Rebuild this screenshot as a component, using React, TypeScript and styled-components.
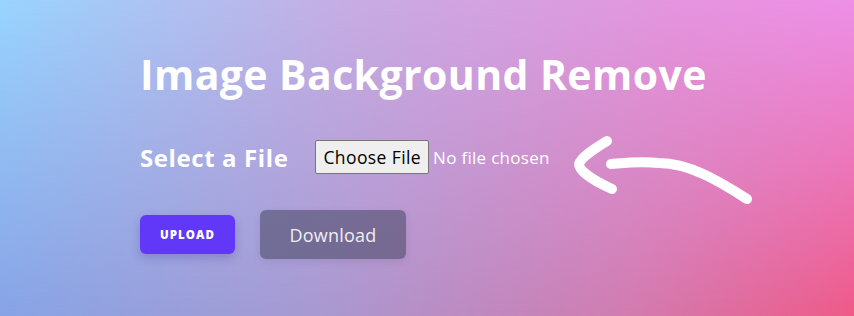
import styled, { createGlobalStyle } from "styled-components";

const GlobalStyle = createGlobalStyle`
  html, body {
    margin: 0;
    padding: 0;
    height: 100%;
  }
  body {
    font-family: "Open Sans", "Noto Sans", sans-serif;
  }
  #root {
    min-height: 100%;
  }
`;

const Page = styled.div`
  position: relative;
  min-height: 316px;
  overflow: hidden;
  background: linear-gradient(100deg, #82a6ea 0%, #a79ad2 40%, #d27cb0 75%, #ef5a88 100%);
  &::before {
    content: "";
    position: absolute;
    inset: 0;
    background: linear-gradient(100deg, #98d4fe 0%, #c8abe2 40%, #e594de 75%, #ef8ee9 100%);
    -webkit-mask-image: linear-gradient(to bottom, #000 0%, rgba(0, 0, 0, 0.45) 55%, transparent 100%);
    mask-image: linear-gradient(to bottom, #000 0%, rgba(0, 0, 0, 0.45) 55%, transparent 100%);
  }
`;

const Content = styled.div`
  position: relative;
  display: flex;
  flex-direction: column;
  padding: 46px 0 0 140px;
`;

const Title = styled.h1`
  margin: 0;
  font-size: 41px;
  font-weight: 700;
  line-height: 56px;
  color: #fff;
  letter-spacing: 0.4px;
`;

const FileRow = styled.div`
  display: flex;
  align-items: center;
  margin-top: 35px;
  height: 40px;
`;

const Label = styled.label`
  font-size: 24px;
  font-weight: 700;
  color: #fff;
  letter-spacing: 0.6px;
  margin-right: 27px;
`;

const FileInput = styled.input`
  font-family: "Open Sans", sans-serif;
  font-size: 17px;
  color: #fff;
  width: 238px;
  letter-spacing: 0.3px;
  &::file-selector-button {
    font-family: inherit;
    font-size: 17.5px;
    letter-spacing: 0.4px;
    color: #000;
    background: #efefef;
    border: 1px solid #767676;
    border-radius: 2px;
    padding: 4px 7px;
    margin-right: 4px;
  }
`;

const Arrow = styled.svg`
  margin-left: 16px;
  margin-top: 27px;
  flex: none;
`;

const Buttons = styled.div`
  display: flex;
  align-items: center;
  gap: 25px;
  margin-top: 33px;
`;

const UploadButton = styled.button`
  width: 95px;
  height: 39px;
  border: 0;
  border-radius: 6px;
  background: #6238f8;
  color: #fff;
  font-family: inherit;
  font-size: 11.5px;
  font-weight: 800;
  letter-spacing: 1.1px;
  text-transform: uppercase;
  box-shadow: 0 4px 10px rgba(60, 40, 140, 0.25);
  cursor: pointer;
`;

const DownloadButton = styled.button`
  width: 146px;
  height: 49px;
  border: 0;
  border-radius: 6px;
  background: rgba(72, 72, 102, 0.58);
  color: #f1eef6;
  font-family: inherit;
  font-size: 18px;
  font-weight: 500;
  letter-spacing: 0.2px;
  box-shadow: 0 3px 8px rgba(0, 0, 0, 0.08);
  cursor: pointer;
`;

export default function App() {
  return (
    <Page>
      <GlobalStyle />
      <Content>
        <Title>Image Background Remove</Title>
        <FileRow>
          <Label htmlFor="file">Select a File</Label>
          <FileInput id="file" type="file" />
          <Arrow width="190" height="80" viewBox="0 0 190 80">
            <path
              d="M178 68 C150 50 120 32 90 32 C70 30 55 32 42 33 M38 10 C25 18 12 26 10 33 C10 40 25 50 43 58"
              fill="none"
              stroke="#fff"
              strokeWidth="10"
              strokeLinecap="round"
              strokeLinejoin="round"
            />
          </Arrow>
        </FileRow>
        <Buttons>
          <UploadButton>Upload</UploadButton>
          <DownloadButton>Download</DownloadButton>
        </Buttons>
      </Content>
    </Page>
  );
}
